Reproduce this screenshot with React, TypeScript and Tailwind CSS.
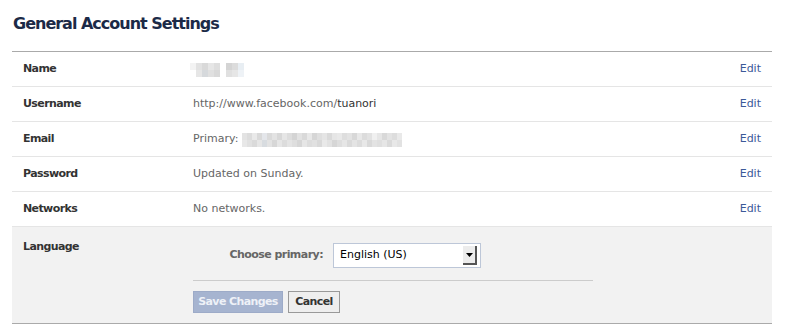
import React from 'react';

const font = { fontFamily: '"DejaVu Sans", Verdana, sans-serif' };

// pixelated placeholder for blurred personal data
const nameBlur = [
  ['#f3f3f3', '#e2e2e2', '#d9d9d9', '#e6e6e6', '#dedede', '#ffffff', '#d4d4d4', '#dcdcdc', '#e8eef3'],
  ['#ffffff', '#e6e6e6', '#d6d9dc', '#e0e0e0', '#d9d9d9', '#ffffff', '#e0e0e0', '#e6e6e6', '#eef2f6'],
];

const emailBlur = [
  ['#e3e3e3', '#dcdcdc', '#e9e9e9', '#d9d9d9', '#e4e6ea', '#dadada', '#e3e3e3', '#d8d8d8', '#e6e6e6', '#dddddd', '#d4d4d4', '#e2e2e2', '#d9d9d9', '#e8e8e8', '#d6d6d6', '#dfdfdf', '#e5e5e5', '#dadada', '#e6e6e6', '#e9e9e9', '#dedede', '#e3e3e3', '#d8d8d8', '#e8e8e8', '#dcdcdc', '#e2e2e2', '#f0f0f0', '#e6e6e6', '#d9d9d9', '#e3e3e3', '#dddddd', '#e9e9e9'],
  ['#e8e8e8', '#e1e1e1', '#dadada', '#e6e6e6', '#d8dce0', '#e3e3e3', '#d7d7d7', '#e6e6e6', '#dcdcdc', '#e4e4e4', '#dedede', '#d6d6d6', '#e6e6e6', '#dddddd', '#e1e1e1', '#d9d9d9', '#e9e9e9', '#e2e2e2', '#d6d6d6', '#dedede', '#e6e6e6', '#dadada', '#e4e4e4', '#dcdcdc', '#e8e8e8', '#d9d9d9', '#e3e3e3', '#dfdfdf', '#e6e6e6', '#dadada', '#e8e8e8', '#e2e2e2'],
];

function Blur({ grid, cell }: { grid: string[][]; cell: number }) {
  return (
    <div className="flex flex-col">
      {grid.map((row, i) => (
        <div key={i} className="flex">
          {row.map((c, j) => (
            <div key={j} style={{ width: cell, height: 7, backgroundColor: c }} />
          ))}
        </div>
      ))}
    </div>
  );
}

function Row({ label, children }: { label: string; children: React.ReactNode }) {
  return (
    <div className="flex h-[35px] items-center border-b border-[#e5e5e5] px-[11px] pt-px text-[11px]">
      <div className="w-[170px] font-bold tracking-[-0.6px] text-[#333]">{label}</div>
      <div className="flex-1 text-[#666]">{children}</div>
      <a href="#" className="text-[#3b5998]">Edit</a>
    </div>
  );
}

export default function App() {
  return (
    <div className="min-h-[327px] bg-white" style={font}>
      <div className="ml-[12px] w-[760px]">
        <div className="h-[52px] border-b border-[#aaaaaa] pt-[14px]">
          <h1 className="pl-px text-[16px] font-bold leading-[20px] tracking-[-1px] text-[#1c2a47]">General Account Settings</h1>
        </div>

        <Row label="Name">
          <div className="-ml-[3px]">
            <Blur grid={nameBlur} cell={6} />
          </div>
        </Row>
        <Row label="Username">
          http://www.facebook.com/<span className="text-[#333]">tuanori</span>
        </Row>
        <Row label="Email">
          <div className="flex items-center gap-[4px]">
            <span>Primary:</span>
            <Blur grid={emailBlur} cell={5} />
          </div>
        </Row>
        <Row label="Password">Updated on Sunday.</Row>
        <Row label="Networks">No networks.</Row>

        <div className="flex h-[97px] border-b border-[#aaaaaa] bg-[#f2f2f2] px-[11px] pt-[12px] text-[11px]">
          <div className="w-[170px] font-bold tracking-[-0.6px] text-[#333]">Language</div>
          <div className="w-[400px]">
            <div className="flex items-center gap-[10px] pt-[4px]">
              <div className="w-[130px] text-right font-bold tracking-[-0.55px] text-[#666]">Choose primary:</div>
              <div className="flex h-[25px] w-[148px] items-center justify-between border border-[#bdc7d8] bg-white pl-[6px] pr-[3px]">
                <span className="text-black">English (US)</span>
                <div className="flex h-[19px] w-[14px] items-center justify-center border-r-2 border-b-2 border-[#555] bg-[#ececec]">
                  <svg width="7" height="4" viewBox="0 0 7 4">
                    <path d="M0 0h7L3.5 4z" fill="#000" />
                  </svg>
                </div>
              </div>
            </div>
            <div className="mt-[12px] border-t border-[#cccccc]" />
            <div className="mt-[10px] flex gap-[5px]">
              <button className="h-[22px] w-[90px] border border-[#9dabc8] bg-[#a6b4d0] text-[11px] font-bold tracking-[-0.6px] text-[#eef1f7]">Save Changes</button>
              <button className="h-[22px] w-[52px] border border-[#999] bg-[#eeeeee] text-[11px] font-bold tracking-[-0.6px] text-[#333]">Cancel</button>
            </div>
          </div>
        </div>
      </div>
    </div>
  );
}
